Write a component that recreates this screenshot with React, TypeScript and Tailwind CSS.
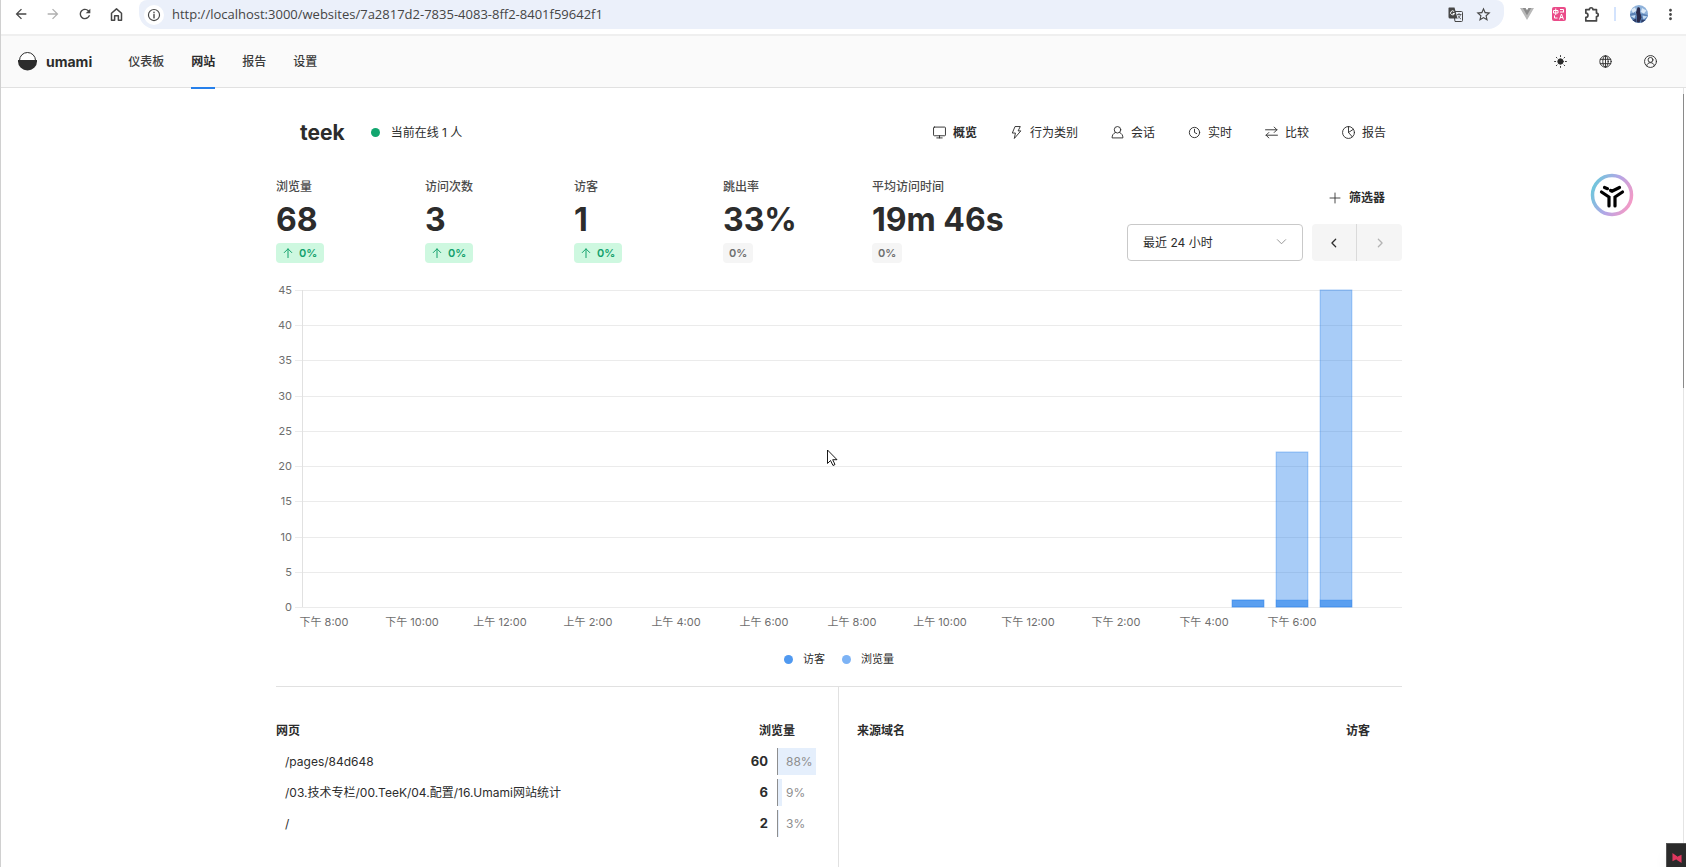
import type { ReactNode } from "react";
import { MdArrowBack, MdArrowForward, MdRefresh, MdStarBorder, MdMoreVert } from "react-icons/md";
import { clsx } from "clsx";

const NAV = ["仪表板", "网站", "报告", "设置"];

const METRICS = [
  { label: "浏览量", value: "68", change: "0%", up: true },
  { label: "访问次数", value: "3", change: "0%", up: true },
  { label: "访客", value: "1", change: "0%", up: true },
  { label: "跳出率", value: "33%", change: "0%", up: false },
  { label: "平均访问时间", value: "19m 46s", change: "0%", up: false },
];

const PAGES = [
  { path: "/pages/84d648", views: 60, percent: 88 },
  { path: "/03.技术专栏/00.TeeK/04.配置/16.Umami网站统计", views: 6, percent: 9 },
  { path: "/", views: 2, percent: 3 },
];

const X_LABELS = [
  "下午 8:00",
  "下午 10:00",
  "上午 12:00",
  "上午 2:00",
  "上午 4:00",
  "上午 6:00",
  "上午 8:00",
  "上午 10:00",
  "下午 12:00",
  "下午 2:00",
  "下午 4:00",
  "下午 6:00",
];

const HOURS = 25;
const MAX = 45;
const PLOT_HEIGHT = 317;
const BARS = [
  { hour: 21, views: 1, visitors: 1 },
  { hour: 22, views: 22, visitors: 1 },
  { hour: 23, views: 45, visitors: 1 },
];

interface IconProps {
  size?: number;
  stroke?: number;
  children: ReactNode;
}

function Icon({ size = 13, stroke = 1.7, children }: IconProps) {
  return (
    <svg
      width={size}
      height={size}
      viewBox="0 0 24 24"
      fill="none"
      stroke="currentColor"
      strokeWidth={stroke}
      strokeLinecap="round"
      strokeLinejoin="round"
      className="shrink-0"
      aria-hidden="true"
    >
      {children}
    </svg>
  );
}

const TABS = [
  {
    label: "概览",
    icon: (
      <>
        <rect x="1" y="2" width="22" height="16" rx="1.5" />
        <path d="M7 22h10M12 18v4" />
      </>
    ),
  },
  {
    label: "行为类别",
    icon: <path d="M10 1h9l-4 8h5L8 23l2-10H5z" />,
  },
  {
    label: "会话",
    icon: (
      <>
        <circle cx="12" cy="7" r="6" />
        <path d="M8 12c-4 2-6 5-6 10h20c0-5-2-8-6-10" />
      </>
    ),
  },
  {
    label: "实时",
    icon: (
      <>
        <circle cx="12" cy="12" r="9.5" />
        <path d="M12 6v6l4 2" />
      </>
    ),
  },
  {
    label: "比较",
    icon: <path d="M1 7h21M17 2l5 5-5 5M23 17H2M7 12l-5 5 5 5" />,
  },
  {
    label: "报告",
    icon: (
      <>
        <circle cx="12" cy="12" r="11" />
        <path d="M12 1v11l7 8M12 12l9-6" />
      </>
    ),
  },
];

function BrowserBar() {
  return (
    <div className="flex h-9 items-start border-b-2 border-[#efefef] bg-white text-[#474747]">
      <div className="flex h-[28px] items-center gap-4 pr-[15px] pl-3">
        <button type="button" aria-label="Back">
          <MdArrowBack size={16} />
        </button>
        <button type="button" aria-label="Forward" className="text-[#b0b0b0]">
          <MdArrowForward size={16} />
        </button>
        <button type="button" aria-label="Reload">
          <MdRefresh size={16} />
        </button>
        <button type="button" aria-label="Home">
          <Icon size={15} stroke={2.4}>
            <path d="M4 10l8-7 8 7v11h-5v-7H9v7H4z" />
          </Icon>
        </button>
      </div>
      <div className="flex h-[29px] flex-1 items-center rounded-b-2xl rounded-t-lg bg-[#ebf0fa] pr-3 pl-[5px]">
        <span className="flex size-5 items-center justify-center rounded-full bg-white">
          <Icon size={14}>
            <circle cx="12" cy="12" r="9.5" strokeWidth="2" />
            <path d="M12 11v6M12 7v1" strokeWidth="2.4" />
          </Icon>
        </span>
        <input
          aria-label="Address"
          className="ml-2 flex-1 bg-transparent font-['Open_Sans',sans-serif] text-[13px] text-[#454545] outline-none"
          defaultValue="http://localhost:3000/websites/7a2817d2-7835-4083-8ff2-8401f59642f1"
        />
        <button type="button" aria-label="Translate" className="mr-3">
          <svg width="15" height="15" viewBox="0 0 30 30" fill="none">
            <path d="M11 9h16a2 2 0 0 1 2 2v16a2 2 0 0 1-2 2H14z" stroke="#474747" strokeWidth="2" />
            <path d="M2 1h11l6 22H4a3 3 0 0 1-3-3V2z" fill="#474747" />
            <path d="M12.500 9.500A4 4 0 1 0 13 13h-3.500" stroke="#fff" strokeWidth="2" />
            <path d="M18 15h9M22 12v3M25 15c-1 4-3 6-5 8M20 17c1 3 3 5 6 7" stroke="#474747" strokeWidth="1.600" />
          </svg>
        </button>
        <button type="button" aria-label="Bookmark">
          <MdStarBorder size={17} />
        </button>
      </div>
      <div className="flex h-[28px] items-center pr-[7px] pl-4">
        <button type="button" aria-label="Vue devtools">
          <svg width="14" height="12" viewBox="0 0 28 24">
            <path d="M0 0h11l3 5 3-5h11L14 24z" fill="#b9b9b9" />
            <path d="M5.500 0H11l3 5 3-5h5.500L14 14.500z" fill="#8b8b8b" />
          </svg>
        </button>
        <button
          type="button"
          aria-label="Translator"
          className="ml-[18px] flex size-[14px] items-center justify-center rounded-[2px] bg-[#ea4c89]"
        >
          <svg width="12" height="12" viewBox="0 0 24 24" fill="none" stroke="#fff" strokeWidth="2">
            <path d="M1 5h9v5H1zM5.500 1v13M14 3h7v5M14 8h8M3 15v5h6M13 23l4-11 4 11M14 19h6" />
          </svg>
        </button>
        <button type="button" aria-label="Extensions" className="ml-[17px]">
          <Icon size={17} stroke={2.4}>
            <path d="M4 5h5a2.500 2.500 0 0 1 5 0h5v5a2.500 2.500 0 0 1 0 5v6H4v-5a3 3 0 0 0 0-6z" />
          </Icon>
        </button>
        <span className="ml-[14px] h-[14px] w-0.5 bg-[#d3e3fd]" />
        <button type="button" aria-label="Profile" className="ml-[14px]">
          <svg width="18" height="18" viewBox="0 0 36 36">
            <clipPath id="avatar">
              <circle cx="18" cy="18" r="18" />
            </clipPath>
            <g clipPath="url(#avatar)">
              <path d="M0 0h36v36H0z" fill="#8fb2da" />
              <path d="M0 18l9-4 5 6 10-3 12 3v16H0z" fill="#5b82b5" />
              <path d="M2 9l8-4 3 6-7 5zM24 6l9 5-5 6-6-3z" fill="#dbe9f7" />
              <path d="M15 5c5-2 6 3 5 8l3 12-4 10h-6l1-12-2-8z" fill="#2b2c4b" />
              <path d="M1 22l10-2-2 7zM25 21l10 2-8 6z" fill="#c3dcf3" />
              <path d="M6 30l6-3v9H6zM23 29l7 1-3 6h-5z" fill="#2f3f6b" />
            </g>
          </svg>
        </button>
        <button type="button" aria-label="Menu" className="ml-[14px]">
          <MdMoreVert size={17} />
        </button>
      </div>
    </div>
  );
}

function NavBar() {
  return (
    <header className="flex h-[52px] items-center justify-between border-b border-[#e1e1e1] bg-[#fafafa] pr-[29px] pl-[17px]">
      <div className="flex h-full items-center">
        <a href="#" className="flex items-center gap-[9px] text-[14px] font-bold">
          <svg width="19" height="19" viewBox="0 0 38 38">
            <path d="M3 17a16 16 0 0 1 32 0" fill="#fff" stroke="#2c2c2c" strokeWidth="2" />
            <path d="M0 16h38v3a19 18 0 0 1-38 0z" fill="#2c2c2c" />
          </svg>
          umami
        </a>
        <nav className="ml-9 flex h-full gap-[27px] text-[12px] font-medium">
          {NAV.map((item) => (
            <a
              key={item}
              href="#"
              className={clsx(
                "relative flex items-center",
                item === "网站" ? "font-bold text-[#2c2c2c]" : "text-[#3c3c3c]",
              )}
            >
              {item}
              {item === "网站" && (
                <span className="absolute inset-x-0 -bottom-0.5 h-0.5 bg-[#2680eb]" />
              )}
            </a>
          ))}
        </nav>
      </div>
      <div className="flex items-center gap-8">
        <button type="button" aria-label="Theme">
          <Icon>
            <circle cx="12" cy="12" r="5" fill="currentColor" />
            <path d="M12 1v2M12 21v2M1 12h2M21 12h2M4.200 4.200l1.400 1.400M18.400 18.400l1.400 1.400M4.200 19.800l1.400-1.400M18.400 5.600l1.400-1.400" />
          </Icon>
        </button>
        <button type="button" aria-label="Language">
          <Icon>
            <circle cx="12" cy="12" r="10.500" />
            <ellipse cx="12" cy="12" rx="5" ry="10.500" />
            <path d="M12 1.500v21M2.500 8h19M2.500 16h19" />
          </Icon>
        </button>
        <button type="button" aria-label="Account">
          <Icon>
            <circle cx="12" cy="12" r="11" />
            <circle cx="12" cy="9" r="4.500" />
            <path d="M5 20c0-8 14-8 14 0" />
          </Icon>
        </button>
      </div>
    </header>
  );
}

function WebsiteHeader() {
  return (
    <div className="flex h-[89px] items-center justify-between pr-4 pl-6">
      <div className="flex items-center">
        <h1 className="text-[21px] font-bold">teek</h1>
        <span className="ml-[26px] size-[9px] rounded-full bg-[#12a66f]" />
        <span className="ml-[11px] text-[12px]">当前在线 1 人</span>
      </div>
      <nav className="flex gap-[33px] text-[12px]">
        {TABS.map((tab, i) => (
          <a
            key={tab.label}
            href="#"
            className={clsx("flex items-center gap-[7px]", i === 0 && "font-bold")}
          >
            <Icon>{tab.icon}</Icon>
            {tab.label}
          </a>
        ))}
      </nav>
    </div>
  );
}

function Metrics() {
  return (
    <div className="flex items-center justify-between">
      <div className="grid grid-cols-[repeat(5,149px)]">
        {METRICS.map((m) => (
          <div key={m.label} className="flex flex-col items-start whitespace-nowrap">
            <div className="text-[12px] leading-5 font-medium text-[#4b4b4b]">{m.label}</div>
            <div className="mt-[5px] text-[32px] leading-9 font-bold">{m.value}</div>
            <div
              className={clsx(
                "mt-[5px] flex h-5 items-center gap-1.5 rounded text-[11px] font-semibold",
                m.up ? "bg-[#cef8e0] px-[7px] text-[#12a06c]" : "bg-[#f5f5f5] px-1.5 text-[#6e6e6e]",
              )}
            >
              {m.up && (
                <Icon size={10} stroke={2.4}>
                  <path d="M12 23V2M3 11l9-9 9 9" />
                </Icon>
              )}
              {m.change}
            </div>
          </div>
        ))}
      </div>
      <div className="flex flex-col items-end gap-2">
        <button
          type="button"
          className="flex h-[37px] items-center gap-2 px-[17px] text-[12px] font-bold"
        >
          <Icon size={12}>
            <path d="M12 2v20M2 12h20" />
          </Icon>
          筛选器
        </button>
        <div className="flex h-[37px] gap-[9px]">
          <div className="relative">
            <select
              aria-label="日期范围"
              className="h-full w-44 appearance-none rounded border border-[#c9c9c9] bg-white pl-[15px] text-[12px]"
            >
              <option>最近 24 小时</option>
            </select>
            <span className="pointer-events-none absolute top-3 right-4 text-[#8e8e8e]">
              <Icon size={11} stroke={2}>
                <path d="M3 8l9 9 9-9" />
              </Icon>
            </span>
          </div>
          <div className="flex overflow-hidden rounded bg-[#f5f5f5]">
            <button
              type="button"
              aria-label="Previous"
              className="flex w-[45px] items-center justify-center border-r border-[#dadada]"
            >
              <Icon size={10} stroke={3}>
                <path d="M16 3l-9 9 9 9" />
              </Icon>
            </button>
            <button
              type="button"
              aria-label="Next"
              disabled
              className="flex w-[45px] items-center justify-center text-[#b3b3b3]"
            >
              <Icon size={10} stroke={3}>
                <path d="M8 3l9 9-9 9" />
              </Icon>
            </button>
          </div>
        </div>
      </div>
    </div>
  );
}

function Chart() {
  const y = (value: number) => Math.round(((MAX - value) / MAX) * PLOT_HEIGHT);
  const ticks = Array.from({ length: 10 }, (_, i) => i * 5);

  return (
    <div className="mt-[27px]">
      <div className="pl-[26px]">
        <svg width="100%" height="345" className="block overflow-visible text-[11px]">
          {ticks.map((t) => (
            <g key={t}>
              <rect x="-7" y={y(t)} width="7" height="1" fill="#ebebeb" />
              <rect x="0" y={y(t)} width="100%" height="1" fill="#ebebeb" />
              <text x="-10" y={y(t) + 4} textAnchor="end" fill="#6e6e6e">
                {t}
              </text>
            </g>
          ))}
          <rect x="0" y="0" width="1" height={PLOT_HEIGHT} fill="#e1e1e1" />
          {BARS.map((b) => {
            const x = `${((b.hour + 0.14) / HOURS) * 100}%`;
            const width = `${(0.72 / HOURS) * 100}%`;
            return (
              <g key={b.hour} fill="#2680eb" stroke="#2680eb">
                <rect
                  x={x}
                  y={y(b.views)}
                  width={width}
                  height={PLOT_HEIGHT - y(b.views)}
                  fillOpacity="0.4"
                  strokeOpacity="0.4"
                />
                <rect
                  x={x}
                  y={y(b.visitors)}
                  width={width}
                  height={PLOT_HEIGHT - y(b.visitors)}
                  fillOpacity="0.6"
                  strokeOpacity="0.3"
                />
              </g>
            );
          })}
          {X_LABELS.map((label, i) => (
            <text
              key={i}
              x={`${((i * 2 + 0.5) / HOURS) * 100}%`}
              y="336"
              textAnchor="middle"
              fill="#6e6e6e"
            >
              {label}
            </text>
          ))}
        </svg>
      </div>
      <div className="mt-[14px] flex h-5 items-center justify-center gap-[17px] text-[11px]">
        <span className="flex items-center gap-2.5">
          <span className="size-[9px] rounded-full bg-[#5099f0]" />
          访客
        </span>
        <span className="flex items-center gap-2.5">
          <span className="size-[9px] rounded-full bg-[#7db3f5]" />
          浏览量
        </span>
      </div>
    </div>
  );
}

function Tables() {
  return (
    <div className="mt-[17px] grid flex-1 grid-cols-2 border-t border-[#e1e1e1] text-[12px]">
      <div className="border-r border-[#e1e1e1] pt-7 pr-[17px]">
        <table className="w-full table-fixed">
          <thead>
            <tr className="h-[31px]">
              <th className="text-left">网页</th>
              <th colSpan={2} className="w-[88px]">
                浏览量
              </th>
            </tr>
          </thead>
          <tbody>
            {PAGES.map((p) => (
              <tr key={p.path} className="h-[31px]">
                <td className="truncate pl-[9px]">
                  <a href="#">{p.path}</a>
                </td>
                <td className="w-11 pr-[9px] text-right text-[13px] font-bold">{p.views}</td>
                <td className="w-11">
                  <div className="relative flex h-[27px] items-center border-l border-[#8e8e8e] pl-2 text-[#8e8e8e]">
                    <span
                      className="absolute inset-y-0 left-0 bg-[#e5effc]"
                      style={{ width: `${p.percent}%` }}
                    />
                    <span className="relative">{p.percent}%</span>
                  </div>
                </td>
              </tr>
            ))}
          </tbody>
        </table>
      </div>
      <div className="pt-7 pl-[18px]">
        <table className="w-full table-fixed">
          <thead>
            <tr className="h-[31px]">
              <th className="text-left">来源域名</th>
              <th className="w-[88px]">访客</th>
            </tr>
          </thead>
        </table>
      </div>
    </div>
  );
}

function FloatingBadge() {
  return (
    <svg
      width="44"
      height="44"
      viewBox="0 0 44 44"
      className="fixed top-[173px] right-[52px]"
      aria-hidden="true"
    >
      <defs>
        <linearGradient id="ring" x1="0" y1="0.300" x2="1" y2="0.700">
          <stop offset="0" stopColor="#6fc6dc" />
          <stop offset="0.500" stopColor="#b3a6e6" />
          <stop offset="1" stopColor="#f49ac6" />
        </linearGradient>
      </defs>
      <circle cx="22" cy="22" r="19.500" fill="#fff" stroke="url(#ring)" strokeWidth="3.500" />
      <g fill="none" stroke="#000" strokeWidth="3.200" strokeLinecap="round">
        <path d="M14.500 14.500l3 1.200M20.500 17.500l1.500.7 7.500-3.700" />
        <path d="M11.500 19l7.500 5v9" />
        <path d="M32.500 19L25 24v9" />
      </g>
    </svg>
  );
}

export default function App() {
  return (
    <div className="flex min-h-screen flex-col border-l border-[#d0d0d0] bg-white font-[Inter,'Noto_Sans_CJK_SC',sans-serif] text-[#2c2c2c]">
      <BrowserBar />
      <NavBar />
      <div className="flex flex-1 flex-col pr-[9px]">
        <main className="mx-auto flex w-full max-w-[1126px] flex-1 flex-col">
          <WebsiteHeader />
          <Metrics />
          <Chart />
          <Tables />
        </main>
      </div>

      <FloatingBadge />
      <span className="fixed top-[88px] right-0.5 bottom-0 w-px bg-[#e4e4e4]" />
      <span className="fixed top-[94px] right-0.5 h-[294px] w-px bg-[#8a8a8a]" />
      <button
        type="button"
        aria-label="Recorder"
        className="fixed right-0 bottom-0 flex h-6 w-5 items-end justify-end border-t border-l border-[#555] bg-[#2a2a2a] pr-1 pb-1 shadow-lg"
      >
        <svg width="10" height="10" viewBox="0 0 22 22">
          <path d="M1 0l10 7v6L1 18zM21 4v18l-11-7V9z" fill="#e0375f" />
        </svg>
      </button>
      <svg
        width="12"
        height="18"
        viewBox="0 0 12 18"
        className="pointer-events-none fixed top-[449px] left-[827px]"
        aria-hidden="true"
      >
        <path
          d="M.5 1v13.500l3-3 2.500 5 2-1-2.300-4.800h4.300z"
          fill="#fff"
          stroke="#000"
          strokeWidth="0.900"
        />
      </svg>
    </div>
  );
}
